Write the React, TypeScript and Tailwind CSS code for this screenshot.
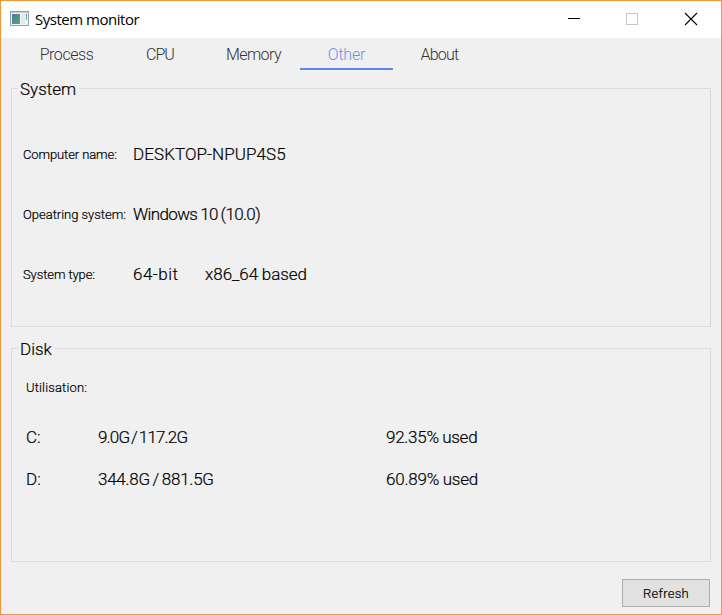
import type { ReactNode } from "react";

const tabs = [
  { name: "Process", spacing: "tracking-[-0.45px] pr-[2px]" },
  { name: "CPU", spacing: "tracking-[-1px] pr-[1px]" },
  { name: "Memory", spacing: "tracking-[-0.6px]" },
  { name: "Other", spacing: "tracking-[-0.2px]" },
  { name: "About", spacing: "tracking-[-0.75px]" },
];

function AppIcon() {
  return (
    <svg className="ml-[9px] mt-[10px] block" width="19" height="16" viewBox="0 0 19 16" shapeRendering="crispEdges">
      <defs>
        <linearGradient id="pane" x1="0" y1="0" x2="1" y2="1">
          <stop offset="0" stopColor="#4b76a3" />
          <stop offset="1" stopColor="#4fae76" />
        </linearGradient>
        <linearGradient id="strip" x1="0" y1="0" x2="0" y2="1">
          <stop offset="0" stopColor="#4b7fb0" />
          <stop offset="1" stopColor="#7cc795" />
        </linearGradient>
      </defs>
      <rect x="0.5" y="0.5" width="18" height="14" fill="#f1f3f4" stroke="#98a0a6" />
      <rect x="1" y="1" width="17" height="1" fill="#c6cbcf" />
      <rect x="2" y="3" width="8" height="10" fill="url(#pane)" />
      <rect x="11" y="3" width="4" height="10" fill="#e3e8e9" />
      <rect x="16" y="3" width="1" height="6" fill="url(#strip)" />
    </svg>
  );
}

function Group({ title, className, children }: { title: ReactNode; className: string; children: ReactNode }) {
  return (
    <fieldset className={"mx-[10px] min-w-0 border border-[#dcdcdc] [-webkit-text-stroke:0.2px_#000] " + className}>
      <legend className="ml-[6px] h-[23px] pl-[2px] pr-[3px] text-[17px] leading-[24px]">{title}</legend>
      {children}
    </fieldset>
  );
}

function Info({ label, children }: { label: ReactNode; children: ReactNode }) {
  return (
    <div className="flex h-[60px] items-center">
      <div className="w-[110px] shrink-0 text-[13px]">{label}</div>
      <div className="flex text-[17px]">{children}</div>
    </div>
  );
}

export default function App() {
  return (
    <div className="flex h-[615px] w-[722px] flex-col overflow-hidden whitespace-nowrap border border-[#f0953a] bg-[#f0f0f0] font-['Roboto',sans-serif] font-light text-black">
      <header className="flex h-[37px] shrink-0 bg-white">
        <AppIcon />
        <h1 className="ml-[6px] flex-1 font-['Open_Sans',sans-serif] text-[15px] font-normal leading-[37px] tracking-[-0.48px]">System monitor</h1>
        <svg className="block" width="153" height="37" viewBox="568 1 153 37" fill="none" shapeRendering="crispEdges">
          <path d="M568 18.5h12" stroke="#000" />
          <rect x="626.5" y="13.5" width="11" height="11" stroke="#c8c8c8" />
          <path d="M685 13l12 12M697 13l-12 12" stroke="#000" strokeWidth="1.1" shapeRendering="auto" />
        </svg>
      </header>

      <nav className="ml-[20px] flex h-[32px] shrink-0 text-[16px] text-[#333]">
        {tabs.map((tab) => (
          <div
            key={tab.name}
            className={
              "w-[93px] text-center leading-[33px] " +
              tab.spacing +
              (tab.name === "Other" ? " border-b-2 border-[#5a8ae6] text-[#6b92ea]" : "")
            }
          >
            {tab.name}
          </div>
        ))}
      </nav>

      <Group title="System" className="mt-[7px] h-[250px]">
        <div className="mt-[25px] pl-[11px]">
          <Info label={<span className="tracking-[-0.1px]">Computer name:</span>}>
            <span className="tracking-[0.08px]">DESKTOP-NPUP4S5</span>
          </Info>
          <Info label={<span className="tracking-[-0.02px]">Opeatring system:</span>}>
            <span className="tracking-[-0.65px] [word-spacing:-0.6px]">Windows 10 (10.0)</span>
          </Info>
          <Info label={<span className="tracking-[-0.1px]">System type:</span>}>
            <span className="w-[72px] tracking-[0.5px]">64-bit</span>
            <span className="tracking-[-0.03px] [word-spacing:-0.5px]">x86_64 based</span>
          </Info>
        </div>
      </Group>

      <Group title="Disk" className="mt-[10px] h-[225px]">
        <div className="pl-[14px] pt-[18px]">
          <div className="h-[20px] text-[13px] leading-[20px] tracking-[0.15px]">Utilisation:</div>
          <div className="mt-[18px] grid grid-cols-[72px_288px_200px] text-[17px] leading-[42px]">
            <span>C:</span>
            <span className="tracking-[-0.85px] [word-spacing:-1.4px]">9.0G / 117.2G</span>
            <span className="tracking-[-0.27px] [word-spacing:-0.4px]">92.35% used</span>
            <span>D:</span>
            <span className="tracking-[-0.25px] [word-spacing:-1.2px]">344.8G / 881.5G</span>
            <span className="tracking-[-0.2px] [word-spacing:-0.4px]">60.89% used</span>
          </div>
        </div>
      </Group>

      <button className="ml-auto mr-[11px] mt-[17px] h-[28px] w-[88px] border border-[#adadad] bg-[#e1e1e1] pt-px text-[13px] leading-[26px] tracking-[0.3px] [-webkit-text-stroke:0.2px_#000]">
        Refresh
      </button>
    </div>
  );
}
